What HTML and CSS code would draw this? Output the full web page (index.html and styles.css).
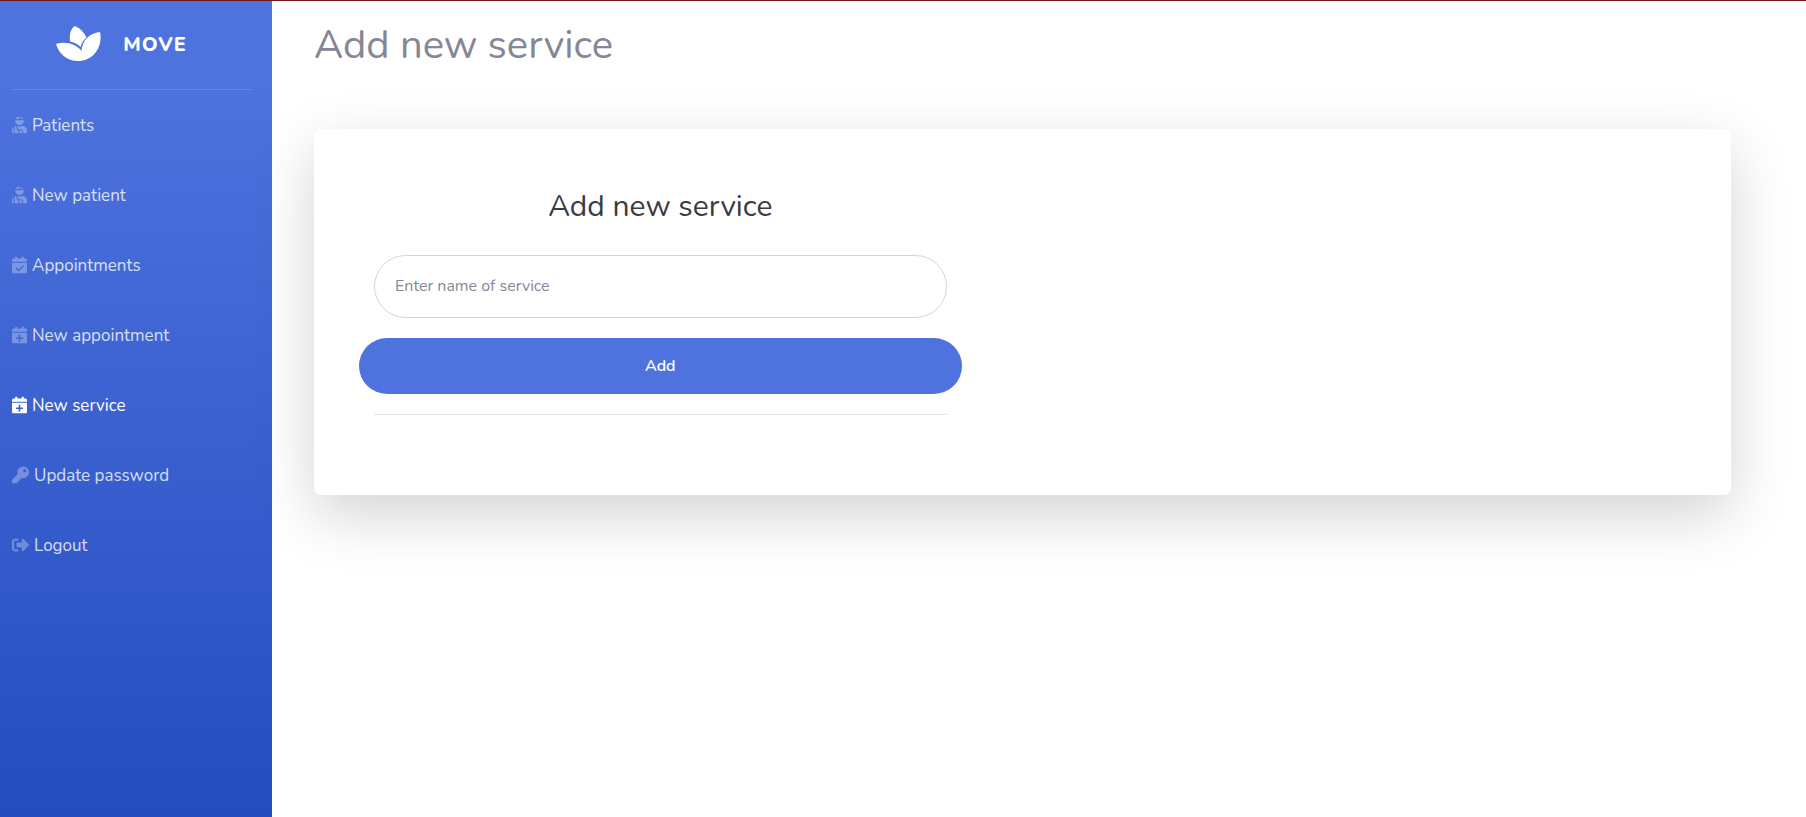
FILE: index.html
```html
<!DOCTYPE html>
<html lang="en">
<head>
<meta charset="utf-8">
<title>Add new service</title>
<link rel="stylesheet" href="styles.css">
</head>
<body>
<svg class="sprite" aria-hidden="true">
  <symbol id="patient" viewBox="0 0 448 512"><path d="M277.37 11.98C261.08 4.47 243.11 0 224 0c-53.69 0-99.5 33.13-118.51 80h81.19l90.69-68.02zM342.51 80c-7.9-19.47-20.67-36.2-36.49-49.52L239.99 80h102.52zM224 256c70.69 0 128-57.31 128-128 0-5.48-.95-10.7-1.61-16H97.61c-.67 5.3-1.61 10.52-1.61 16 0 70.69 57.31 128 128 128zM80 299.7V512h128.26l-98.45-221.52A132.835 132.835 0 0 0 80 299.7zM0 464c0 26.51 21.49 48 48 48V320.24C18.88 344.89 0 381.26 0 422.4V464zm256-48h-55.38l42.67 96H256c26.47 0 48-21.53 48-48s-21.53-48-48-48zm57.6-128h-16.71c-22.24 10.18-46.88 16-72.89 16s-50.65-5.82-72.89-16h-7.37l42.67 96H256c44.11 0 80 35.89 80 80 0 18.08-6.26 34.59-16.41 48H400c26.51 0 48-21.49 48-48v-41.6c0-74.23-60.17-134.4-134.4-134.4z"/></symbol>
  <symbol id="cal-check" viewBox="0 0 448 512"><path d="M0 160V112Q0 64 48 64H96V12Q96 0 108 0H148Q160 0 160 12V64H288V12Q288 0 300 0H340Q352 0 352 12V64H400Q448 64 448 112V160ZM0 192H448V464Q448 512 400 512H48Q0 512 0 464ZM331 262L199 393L133 327L106 354L199 447L358 289Z" fill-rule="evenodd"/></symbol>
  <symbol id="cal-plus" viewBox="0 0 448 512"><path d="M0 160V112Q0 64 48 64H96V12Q96 0 108 0H148Q160 0 160 12V64H288V12Q288 0 300 0H340Q352 0 352 12V64H400Q448 64 448 112V160ZM0 192H448V464Q448 512 400 512H48Q0 512 0 464ZM200 248V328H120V376H200V456H248V376H328V328H248V248Z" fill-rule="evenodd"/></symbol>
  <symbol id="key" viewBox="0 0 512 512"><path d="M512 176C512 273 433 352 336 352C325 352 314 351 303 349L279 376Q272 384 261 384H224V424Q224 448 200 448H160V488Q160 512 136 512H24Q0 512 0 488V410Q0 400 7 393L169 231C163 214 160 195 160 176C160 79 239 0 336 0S512 79 512 176ZM336 128A48 48 0 1 0 432 128A48 48 0 1 0 336 128" fill-rule="evenodd"/></symbol>
  <symbol id="logout" viewBox="0 0 512 512"><path d="M180 448H96Q0 448 0 352V160Q0 64 96 64H180Q192 64 192 76V116Q192 128 180 128H96Q64 128 64 160V352Q64 384 96 384H180Q192 384 192 396V436Q192 448 180 448ZM505 273L337 441C322 456 296 446 296 424V328H160Q136 328 136 304V208Q136 184 160 184H296V88C296 67 322 56 337 71L505 239Q519 256 505 273Z"/></symbol>
</svg>
<div class="page">
  <nav class="sidebar">
    <a class="brand" href="#">
      <svg class="logo" viewBox="0 0 45 35" aria-hidden="true"><path d="M0 18C10 15 20 18 25.500 25C26 15 33 7 44 6C47 20 38 35 22 35C11 35 3 28 0 18Z"/><path d="M18.500 0C14 4 13.500 9 14 15.500C18 16.500 22 18 24.500 21C25.500 17 27.500 14 30.500 11.500C28 6 24 2 18.500 0Z"/></svg>
      <span>MOVE</span>
    </a>
    <hr class="divider">
    <ul class="menu">
      <li><a href="#"><svg viewBox="0 0 448 512"><use href="#patient"/></svg>Patients</a></li>
      <li><a href="#"><svg viewBox="0 0 448 512"><use href="#patient"/></svg>New patient</a></li>
      <li><a href="#"><svg viewBox="0 0 448 512"><use href="#cal-check"/></svg>Appointments</a></li>
      <li><a href="#"><svg viewBox="0 0 448 512"><use href="#cal-plus"/></svg>New appointment</a></li>
      <li><a class="active" href="#" aria-current="page"><svg viewBox="0 0 448 512"><use href="#cal-plus"/></svg>New service</a></li>
      <li><a href="#"><svg class="wide" viewBox="0 0 512 512"><use href="#key"/></svg>Update password</a></li>
      <li><a href="#"><svg class="wide" viewBox="0 0 512 512"><use href="#logout"/></svg>Logout</a></li>
    </ul>
  </nav>
  <main class="content">
    <h1>Add new service</h1>
    <section class="card">
      <form class="service-form">
        <h2>Add new service</h2>
        <input type="text" placeholder="Enter name of service" aria-label="Name of service">
        <button type="button">Add</button>
        <hr>
      </form>
    </section>
  </main>
</div>
</body>
</html>
```
FILE: styles.css
```css
* { box-sizing: border-box; }
body {
  margin: 0;
  border-top: 1px solid #7b1416;
  background: #fff;
  color: #858796;
  font-family: Nunito, Lato, sans-serif;
  font-size: 20px;
  line-height: 30px;
}
.sprite { position: absolute; width: 0; height: 0; }
.page { display: flex; min-height: calc(100vh - 1px); }
.sidebar {
  flex: 0 0 272px;
  background: linear-gradient(180deg, #4e73df 10%, #224abe 106%);
}
.brand {
  display: flex;
  align-items: center;
  justify-content: center;
  gap: 22px;
  height: 88px;
  padding-right: 29px;
  color: #fff;
  font-weight: 800;
  letter-spacing: 1px;
  text-decoration: none;
}
.logo { width: 45px; height: 35px; margin-bottom: 4px; fill: #fff; }
.divider {
  margin: 0 20px 0 12px;
  border: 0;
  border-top: 1px solid rgba(255, 255, 255, .15);
}
.menu { margin: 0; padding: 0; list-style: none; }
.menu a {
  display: flex;
  align-items: center;
  gap: 5px;
  height: 70px;
  padding: 0 12px;
  color: rgba(255, 255, 255, .8);
  font-size: 17px;
  line-height: 25px;
  text-decoration: none;
}
.menu svg { width: 15px; height: 18px; fill: rgba(255, 255, 255, .3); }
.menu svg.wide { width: 17px; }
.menu .active { color: #fff; }
.menu .active svg { fill: #fff; }
.content { flex: 1; padding: 20px 75px 60px 42px; }
h1 { margin: 0 0 60px; font-size: 40px; font-weight: 400; line-height: 48px; }
.card {
  padding-bottom: 80px;
  border-radius: 7px;
  background: #fff;
  box-shadow: 0 20px 60px rgba(0, 0, 0, .175);
}
.service-form {
  display: flex;
  flex-direction: column;
  width: calc(50% - 16px);
  padding: 60px 60px 0;
}
h2 {
  margin: 0 0 30px;
  color: #3a3b45;
  font-size: 30px;
  font-weight: 400;
  line-height: 36px;
  text-align: center;
}
input {
  height: 63px;
  margin-bottom: 20px;
  padding: 0 20px 2px;
  border: 1px solid #d1d3e2;
  border-radius: 32px;
  background: #fff;
  font: 400 16px/24px Nunito, Lato, sans-serif;
}
input::placeholder { color: #858796; opacity: 1; }
button {
  height: 56px;
  margin: 0 -15px 20px;
  border: 0;
  border-radius: 28px;
  background: #4e73df;
  color: #fff;
  font: 600 16px/24px Nunito, Lato, sans-serif;
}
.service-form hr { width: 100%; margin: 0; border: 0; border-top: 1px solid rgba(0, 0, 0, .1); }
```
